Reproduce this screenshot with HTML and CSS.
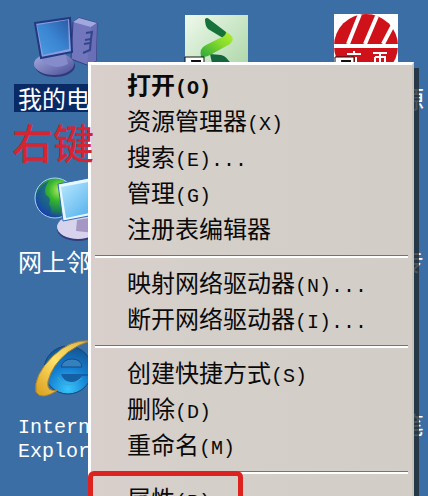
FILE: index.html
```html
<!DOCTYPE html>
<html lang="zh-CN">
<head>
<meta charset="utf-8">
<title>桌面</title>
<link rel="stylesheet" href="styles.css">
</head>
<body>
<main class="desktop">
  <a class="shortcut selected" href="#computer">
    <svg class="icon" viewBox="0 0 66 66" aria-hidden="true">
      <defs>
        <linearGradient id="screen" x1="0" y1="1" x2="1" y2="0"><stop offset="0" stop-color="#4a9be0"/><stop offset=".5" stop-color="#3b86d3"/><stop offset="1" stop-color="#2a5ca6"/></linearGradient>
        <linearGradient id="base" x1="0" y1="0" x2="1" y2="1"><stop offset="0" stop-color="#a9aee0"/><stop offset="1" stop-color="#4a4f98"/></linearGradient>
      </defs>
      <path d="M40 8 46 4 64 9 63 47 54 51 38 45z" fill="#7277bd" stroke="#343c83"/>
      <path d="M40 8 46 4 64 9 58 13z" fill="#a2a8de"/>
      <path d="M58 13 64 9 63 47 54 51z" fill="#6a6eb6"/>
      <path d="M53 19 59 18 58 25 52 26M58 25 57 36 50 39M51 30l6-1" fill="none" stroke="#34468b" stroke-width="2"/>
      <ellipse cx="22" cy="52" rx="20" ry="11" fill="#30397d"/>
      <ellipse cx="21" cy="50" rx="20" ry="11" fill="url(#base)"/>
      <path d="M12 38 32 38 35 50Q22 57 9 47z" fill="#858bcb"/>
      <path d="M2 9 37 4 39 38 8 44z" fill="#8e9bdd" stroke="#1f3a80" stroke-width="2"/>
      <path d="M4 11 35 6 36 35 10 41z" fill="url(#screen)"/>
    </svg>
    <span class="label">我的电脑</span>
  </a>
  <a class="shortcut" href="#green">
    <svg class="icon" viewBox="0 0 66 66" aria-hidden="true">
      <defs>
        <linearGradient id="tile" x1="0" y1="0" x2="1" y2="1"><stop offset="0" stop-color="#eef9ec"/><stop offset="1" stop-color="#a6d3a0"/></linearGradient>
        <linearGradient id="lime" x1="0" y1="1" x2="1" y2="0"><stop offset="0" stop-color="#2ba53d"/><stop offset=".6" stop-color="#88dc2b"/><stop offset="1" stop-color="#b5ee35"/></linearGradient>
      </defs>
      <path d="M2 1H65V65H2z" fill="url(#tile)"/>
      <path d="M22 5Q24 3 26 5L43 18Q46 21 40 24L25 15Q22 12 22 5z" fill="#17723a"/>
      <path d="M27 40 38 41Q44 42 49 52L31 58z" fill="#15663a"/>
      <path d="M43 18Q54 23 47 30L38 35 29 40Q21 44 18 43 16 34 23 31L37 24Q43 22 43 18z" fill="url(#lime)"/>
      <path d="M2 43H21V64H2z" fill="#fff" stroke="#111"/>
      <path d="M8 46h10v8l-3-3-6 6z" fill="#111"/>
    </svg>
  </a>
  <a class="shortcut" href="#red">
    <svg class="icon" viewBox="0 0 66 66" aria-hidden="true">
      <path d="M1 0H65V65H1z" fill="#fff"/>
      <circle cx="33" cy="32" r="32" fill="#cf1119"/>
      <path d="M1 30H65V34H1z" fill="#fff"/>
      <path d="M15 30 27 0M32 30 44 2M50 30 61 9" stroke="#fff" stroke-width="4"/>
      <path d="M14 40h14M21 37v3M18 43l-3 6M23 43v6M40 39h14M47 39v10M42 43h10v7M42 43v7" fill="none" stroke="#fff" stroke-width="2"/>
      <path d="M2 43H21V64H2z" fill="#fff" stroke="#111"/>
      <path d="M8 46h10v8l-3-3-6 6z" fill="#111"/>
    </svg>
    <span class="label wide">资源</span>
  </a>

  <a class="shortcut" href="#network">
    <svg class="icon" viewBox="0 0 66 66" aria-hidden="true">
      <defs>
        <radialGradient id="globe" cx=".62" cy=".3" r=".7"><stop offset="0" stop-color="#b5f05b"/><stop offset=".4" stop-color="#35b52e"/><stop offset=".75" stop-color="#1c7f58"/><stop offset="1" stop-color="#1c3fa5"/></radialGradient>
        <linearGradient id="glass" x1="0" y1="0" x2="1" y2="1"><stop offset="0" stop-color="#bceaff"/><stop offset="1" stop-color="#43a7ea"/></linearGradient>
      </defs>
      <circle cx="22" cy="21" r="20" fill="url(#globe)" stroke="#a7d5f3"/>
      <path d="M3 20Q6 8 16 4 10 12 13 18 19 21 16 27 20 33 16 38 4 35 3 20z" fill="#1746b3" opacity=".6"/>
      <ellipse cx="45" cy="52" rx="21" ry="12" fill="#343b7c"/>
      <ellipse cx="45" cy="50" rx="21" ry="12" fill="#d8d3ec"/>
      <path d="M44 43 62 40V56L43 54z" fill="#a497c3"/>
      <path d="M25 7 66-1V37L30 44z" fill="#e6f7ff" stroke="#346ab2"/>
      <path d="M28 10 66 3V34L33 41z" fill="url(#glass)"/>
    </svg>
    <span class="label">网上邻居</span>
  </a>
  <span></span>
  <a class="shortcut" href="#topic">
    <span class="icon"></span>
    <span class="label wide">专</span>
  </a>

  <a class="shortcut" href="#ie">
    <svg class="icon" viewBox="0 0 66 66" aria-hidden="true">
      <defs>
        <radialGradient id="blue" cx=".5" cy=".9" r=".9"><stop offset="0" stop-color="#38c4fa"/><stop offset=".5" stop-color="#147ed0"/><stop offset="1" stop-color="#155391"/></radialGradient>
        <linearGradient id="gold" x1="0" y1="1" x2="1" y2="0"><stop offset="0" stop-color="#d99b19"/><stop offset=".5" stop-color="#ffe26a"/><stop offset="1" stop-color="#d9af45"/></linearGradient>
      </defs>
      <circle cx="35" cy="30" r="24" fill="url(#blue)" stroke="#124679"/>
      <path d="M28 27Q30 19 39 19 48 19 49 27z" fill="#3580bd" stroke="#0d4f8c"/>
      <path d="M28 34H58V36H49Q45 42 38 42 30 41 28 34z" fill="#155fa4"/>
      <path d="M25 37Q29 47 40 44L49 38" fill="none" stroke="#3aa5e0"/>
      <path d="M57 1Q38-1 20 16 0 36 3 52 8 61 25 50 13 53 15 41 19 25 35 12 46 4 57 1z" fill="url(#gold)" stroke="#a98436"/>
    </svg>
    <span class="label latin">Internet Explorer</span>
  </a>
  <span></span>
  <a class="shortcut" href="#notes">
    <span class="icon"></span>
    <span class="label wide">笔</span>
  </a>
</main>

<ul class="menu">
  <li><button class="default">打开<span class="key">(O)</span></button></li>
  <li><button>资源管理器<span class="key">(X)</span></button></li>
  <li><button>搜索<span class="key">(E)...</span></button></li>
  <li><button>管理<span class="key">(G)</span></button></li>
  <li><button>注册表编辑器</button></li>
  <li class="rule"></li>
  <li><button>映射网络驱动器<span class="key">(N)...</span></button></li>
  <li><button>断开网络驱动器<span class="key">(I)...</span></button></li>
  <li class="rule"></li>
  <li><button>创建快捷方式<span class="key">(S)</span></button></li>
  <li><button>删除<span class="key">(D)</span></button></li>
  <li><button>重命名<span class="key">(M)</span></button></li>
  <li class="rule"></li>
  <li class="marked"><button>属性<span class="key">(R)</span></button></li>
</ul>
<p class="note">右键</p>
</body>
</html>
```
FILE: styles.css
```css
*, *::after { box-sizing: border-box; }
body {
  margin: 0;
  height: 100vh;
  position: relative;
  overflow: hidden;
  background: #3a6ea5;
  font-family: "Noto Sans CJK SC", sans-serif;
}
.desktop {
  display: grid;
  grid-template-columns: 132px 168px 132px;
  grid-auto-rows: 163px;
  padding-top: 14px;
}
.shortcut {
  display: flex;
  flex-direction: column;
  align-items: center;
  gap: 4px;
  color: #fff;
  text-decoration: none;
}
.icon { width: 66px; height: 66px; flex: none; }
.label {
  padding: 2px 4px;
  font-size: 24px;
  line-height: 24px;
}
.selected .label { background: #0a2a66; }
.label.latin {
  width: 104px;
  padding-top: 6px;
  font-family: "Liberation Mono", monospace;
  font-size: 20px;
}
.label.wide { width: 124px; text-align: right; }
.menu {
  position: absolute;
  top: 62px;
  left: 88px;
  right: 14px;
  margin: 0;
  padding: 1px 0;
  list-style: none;
  background: linear-gradient(90deg, #d9cfcc, #d4cfc9 40%, #d2cec7);
  border: 3px solid #fff;
  border-right: 2px solid #c5c2bc;
  box-shadow: 5px 6px 0 rgba(34, 42, 48, 0.8);
}
.menu button {
  display: block;
  width: 100%;
  height: 36px;
  padding: 0 36px;
  border: 0;
  background: none;
  color: #0a0a0a;
  font-family: inherit;
  font-size: 24px;
  line-height: 36px;
  text-align: left;
  white-space: nowrap;
}
.menu .default { font-weight: 700; }
.key {
  font-family: "Liberation Mono", monospace;
  font-size: 20px;
}
.rule {
  height: 3px;
  margin: 9px 4px 6px;
  background: #fff;
  border-top: 1px solid #77736e;
}
.marked { position: relative; }
.marked::after {
  content: "";
  position: absolute;
  top: -9px;
  left: -3px;
  width: 155px;
  height: 56px;
  border: 5px solid #dc231f;
  border-radius: 6px;
  pointer-events: none;
}
.note {
  position: absolute;
  top: 117px;
  left: 12px;
  margin: 0;
  color: #d42532;
  font-size: 41px;
  font-weight: 500;
  line-height: 48px;
}
```
